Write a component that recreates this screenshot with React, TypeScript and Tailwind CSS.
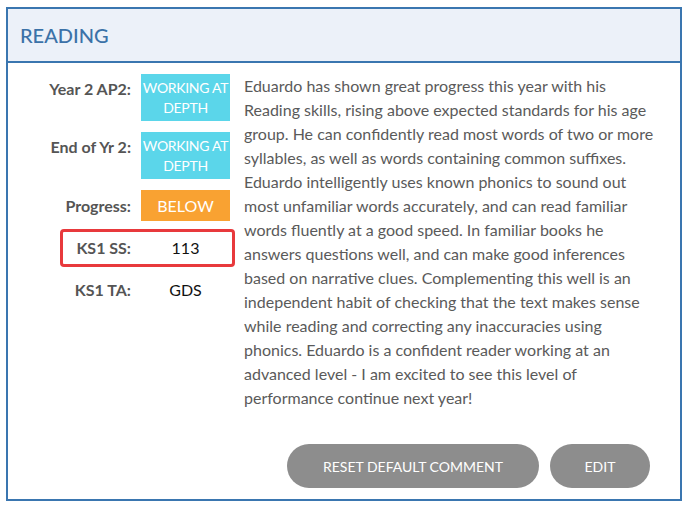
import React from "react";

type Row = { label: string; value: string; kind: "cyan" | "orange" };

const rows: Row[] = [
  { label: "Year 2 AP2:", value: "WORKING AT DEPTH", kind: "cyan" },
  { label: "End of Yr 2:", value: "WORKING AT DEPTH", kind: "cyan" },
  { label: "Progress:", value: "BELOW", kind: "orange" },
];

const comment =
  "Eduardo has shown great progress this year with his Reading skills, rising above expected standards for his age group. He can confidently read most words of two or more syllables, as well as words containing common suffixes. Eduardo intelligently uses known phonics to sound out most unfamiliar words accurately, and can read familiar words fluently at a good speed. In familiar books he answers questions well, and can make good inferences based on narrative clues. Complementing this well is an independent habit of checking that the text makes sense while reading and correcting any inaccuracies using phonics. Eduardo is a confident reader working at an advanced level - I am excited to see this level of performance continue next year!";

function Badge({ row }: { row: Row }) {
  if (row.kind === "cyan") {
    return (
      <div className="w-[89px] h-[47px] bg-[#5bd6ea] text-white text-[14px] leading-[20px] tracking-[-0.3px] flex items-center justify-center text-center px-[1px]">
        WORKING AT<br />DEPTH
      </div>
    );
  }
  return (
    <div className="w-[89px] h-[31px] bg-[#f9a232] text-white text-[16px] flex items-center justify-center">
      {row.value}
    </div>
  );
}

export default function App() {
  return (
    <div className="w-[688px] h-[507px] bg-white pt-[7px] pl-[6px] font-['Lato','Liberation_Sans',sans-serif]">
      <div className="w-[676px] h-[494px] border-2 border-[#3a76b0] flex flex-col">
        <div className="h-[54px] bg-[#ecf1f9] border-b-2 border-[#3a76b0] flex items-center pl-[12px] shrink-0">
          <h2 className="text-[20px] font-medium text-[#3b72a8]">READING</h2>
        </div>

        <div className="flex pt-[11px]">
          <div className="w-[222px] shrink-0 flex flex-col">
            {rows.map((r, i) => (
              <div key={i} className={`flex ${r.kind === "cyan" ? "items-start" : "items-center"} ${i > 0 ? "mt-[11px]" : ""}`}>
                <div
                  className={`flex-1 text-right pr-[10px] text-[16px] leading-[24px] font-bold text-[#555] ${
                    r.kind === "cyan" ? "pt-[3px]" : ""
                  }`}
                >
                  {r.label}
                </div>
                <Badge row={r} />
              </div>
            ))}
            <div className="mt-[8px] ml-[52px] -mr-[5px] h-[38px] border-[3px] border-[#e8393c] rounded-[4px] flex items-center pr-[2px]">
              <div className="flex-1 text-right pr-[10px] text-[16px] font-bold text-[#555]">KS1 SS:</div>
              <div className="w-[89px] text-center text-[16px] text-[#111]">113</div>
            </div>
            <div className="mt-[7px] h-[32px] flex items-center">
              <div className="flex-1 text-right pr-[10px] text-[16px] font-bold text-[#555]">KS1 TA:</div>
              <div className="w-[89px] text-center text-[16px] text-[#111]">GDS</div>
            </div>
          </div>
          <p className="ml-[14px] mr-[24px] flex-1 text-[16px] leading-[24px] text-[#5a5a5a]">{comment}</p>
        </div>

        <div className="flex-1" />
        <div className="flex justify-end gap-[11px] pr-[30px] pb-[11px]">
          <button className="h-[44px] w-[252px] rounded-full bg-[#8d8d8d] text-white text-[14px]">
            RESET DEFAULT COMMENT
          </button>
          <button className="h-[44px] w-[100px] rounded-full bg-[#8d8d8d] text-white text-[14px]">EDIT</button>
        </div>
      </div>
    </div>
  );
}
